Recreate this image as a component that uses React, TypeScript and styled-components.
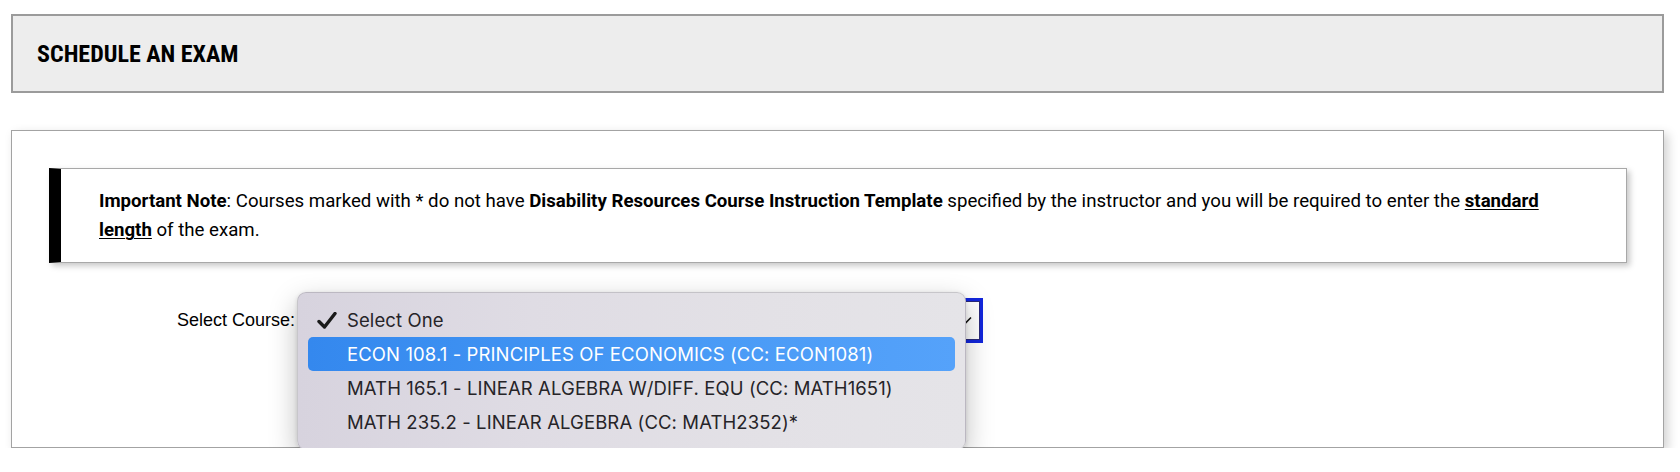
import React from "react";
import styled, { createGlobalStyle } from "styled-components";

const GlobalStyle = createGlobalStyle`
  html, body { margin: 0; padding: 0; background: #ffffff; }
  body { font-family: Roboto, "Liberation Sans", Arial, sans-serif; color: #000; }
`;

const Page = styled.div`
  padding: 14px 16px 0 11px;
`;

const Header = styled.header`
  height: 75px;
  display: flex;
  align-items: center;
  padding-left: 24px;
  background: #ededed;
  border: 2px solid #9b9b9b;
`;

const Title = styled.h1`
  margin: 0;
  font-family: "Roboto Condensed", Roboto, sans-serif;
  font-weight: 700;
  font-size: 24px;
  letter-spacing: 0;
  text-transform: uppercase;
  color: #000;
`;

const Panel = styled.section`
  margin-top: 37px;
  border: 1px solid #a3a3a3;
  padding: 37px 36px 104px 37px;
  box-shadow: 4px 4px 10px rgba(0, 0, 0, 0.18);
`;

const Note = styled.div`
  border: 1px solid #a8a8a8;
  border-left: 12px solid #000;
  padding: 18px 38px 17px 38px;
  font-family: Roboto, sans-serif;
  font-size: 18.65px;
  line-height: 29px;
  color: #000;
  box-shadow: 3px 3px 6px rgba(0, 0, 0, 0.22);
`;

const Strong = styled.b`
  font-weight: 700;
`;

const Emph = styled.b`
  font-weight: 700;
  text-decoration: underline;
  text-decoration-thickness: 1px;
  text-underline-offset: 2px;
`;

const FormRow = styled.div`
  margin-top: 35px;
  display: grid;
  grid-template-columns: 246px 682px;
  column-gap: 6px;
  align-items: center;
`;

const Label = styled.label`
  text-align: right;
  font-family: "Liberation Sans", Arial, sans-serif;
  font-size: 18px;
  color: #000;
`;

const SelectWrap = styled.div`
  position: relative;
`;

const SelectBox = styled.div`
  box-sizing: border-box;
  height: 45px;
  border: 3px solid #1226dc;
  box-shadow: inset 0 0 0 1px #2a2a7a;
  background: #fff;
  display: flex;
  align-items: center;
  justify-content: flex-end;
  padding-right: 8px;
`;

const Menu = styled.ul`
  position: absolute;
  left: -4px;
  top: -6px;
  width: 669px;
  box-sizing: border-box;
  margin: 0;
  padding: 10px;
  list-style: none;
  border-radius: 9px;
  border: 1px solid rgba(0, 0, 0, 0.13);
  background: linear-gradient(90deg, #d7d3de 0%, #dfdce4 35%, #e3e1e6 70%, #e5e4e8 100%);
  box-shadow: 0 10px 28px rgba(0, 0, 0, 0.26), 0 1px 4px rgba(0, 0, 0, 0.12);
  z-index: 2;
`;

const Item = styled.li<{ $active?: boolean }>`
  height: 34px;
  display: flex;
  align-items: center;
  padding-left: 39px;
  position: relative;
  border-radius: 5px;
  font-family: Inter, "Noto Sans", sans-serif;
  font-size: 18.5px;
  letter-spacing: 0.1px;
  color: ${(p) => (p.$active ? "#ffffff" : "#262428")};
  background: ${(p) =>
    p.$active ? "linear-gradient(90deg, #3488ee 0%, #4799f5 55%, #55a2fa 100%)" : "transparent"};
`;

const Check = styled.svg`
  position: absolute;
  left: 9px;
  top: 9px;
`;

const courses = [
  "ECON 108.1 - PRINCIPLES OF ECONOMICS (CC: ECON1081)",
  "MATH 165.1 - LINEAR ALGEBRA W/DIFF. EQU (CC: MATH1651)",
  "MATH 235.2 - LINEAR ALGEBRA (CC: MATH2352)*",
];

export default function App() {
  return (
    <>
      <GlobalStyle />
      <Page>
        <Header>
          <Title>Schedule an Exam</Title>
        </Header>
        <Panel>
          <Note>
            <Strong>Important Note</Strong>: Courses marked with * do not have{" "}
            <Strong>Disability Resources Course Instruction Template</Strong> specified by the
            instructor and you will be required to enter the <Emph>standard</Emph>{" "}
            <Emph>length</Emph> of the exam.
          </Note>
          <FormRow>
            <Label>Select Course:</Label>
            <SelectWrap>
              <SelectBox>
                <svg width="14" height="9" viewBox="0 0 14 9">
                  <path d="M1 1.5 L7 7.5 L13 1.5" fill="none" stroke="#111" strokeWidth="1.6" />
                </svg>
              </SelectBox>
              <Menu>
                <Item>
                  <Check width="20" height="17" viewBox="0 0 20 17">
                    <path
                      d="M2 9.5 L7.5 15 L18 1.5"
                      fill="none"
                      stroke="#1a1a1a"
                      strokeWidth="3.4"
                      strokeLinecap="round"
                      strokeLinejoin="round"
                    />
                  </Check>
                  Select One
                </Item>
                {courses.map((c, i) => (
                  <Item key={c} $active={i === 0}>
                    {c}
                  </Item>
                ))}
              </Menu>
            </SelectWrap>
          </FormRow>
        </Panel>
      </Page>
    </>
  );
}
